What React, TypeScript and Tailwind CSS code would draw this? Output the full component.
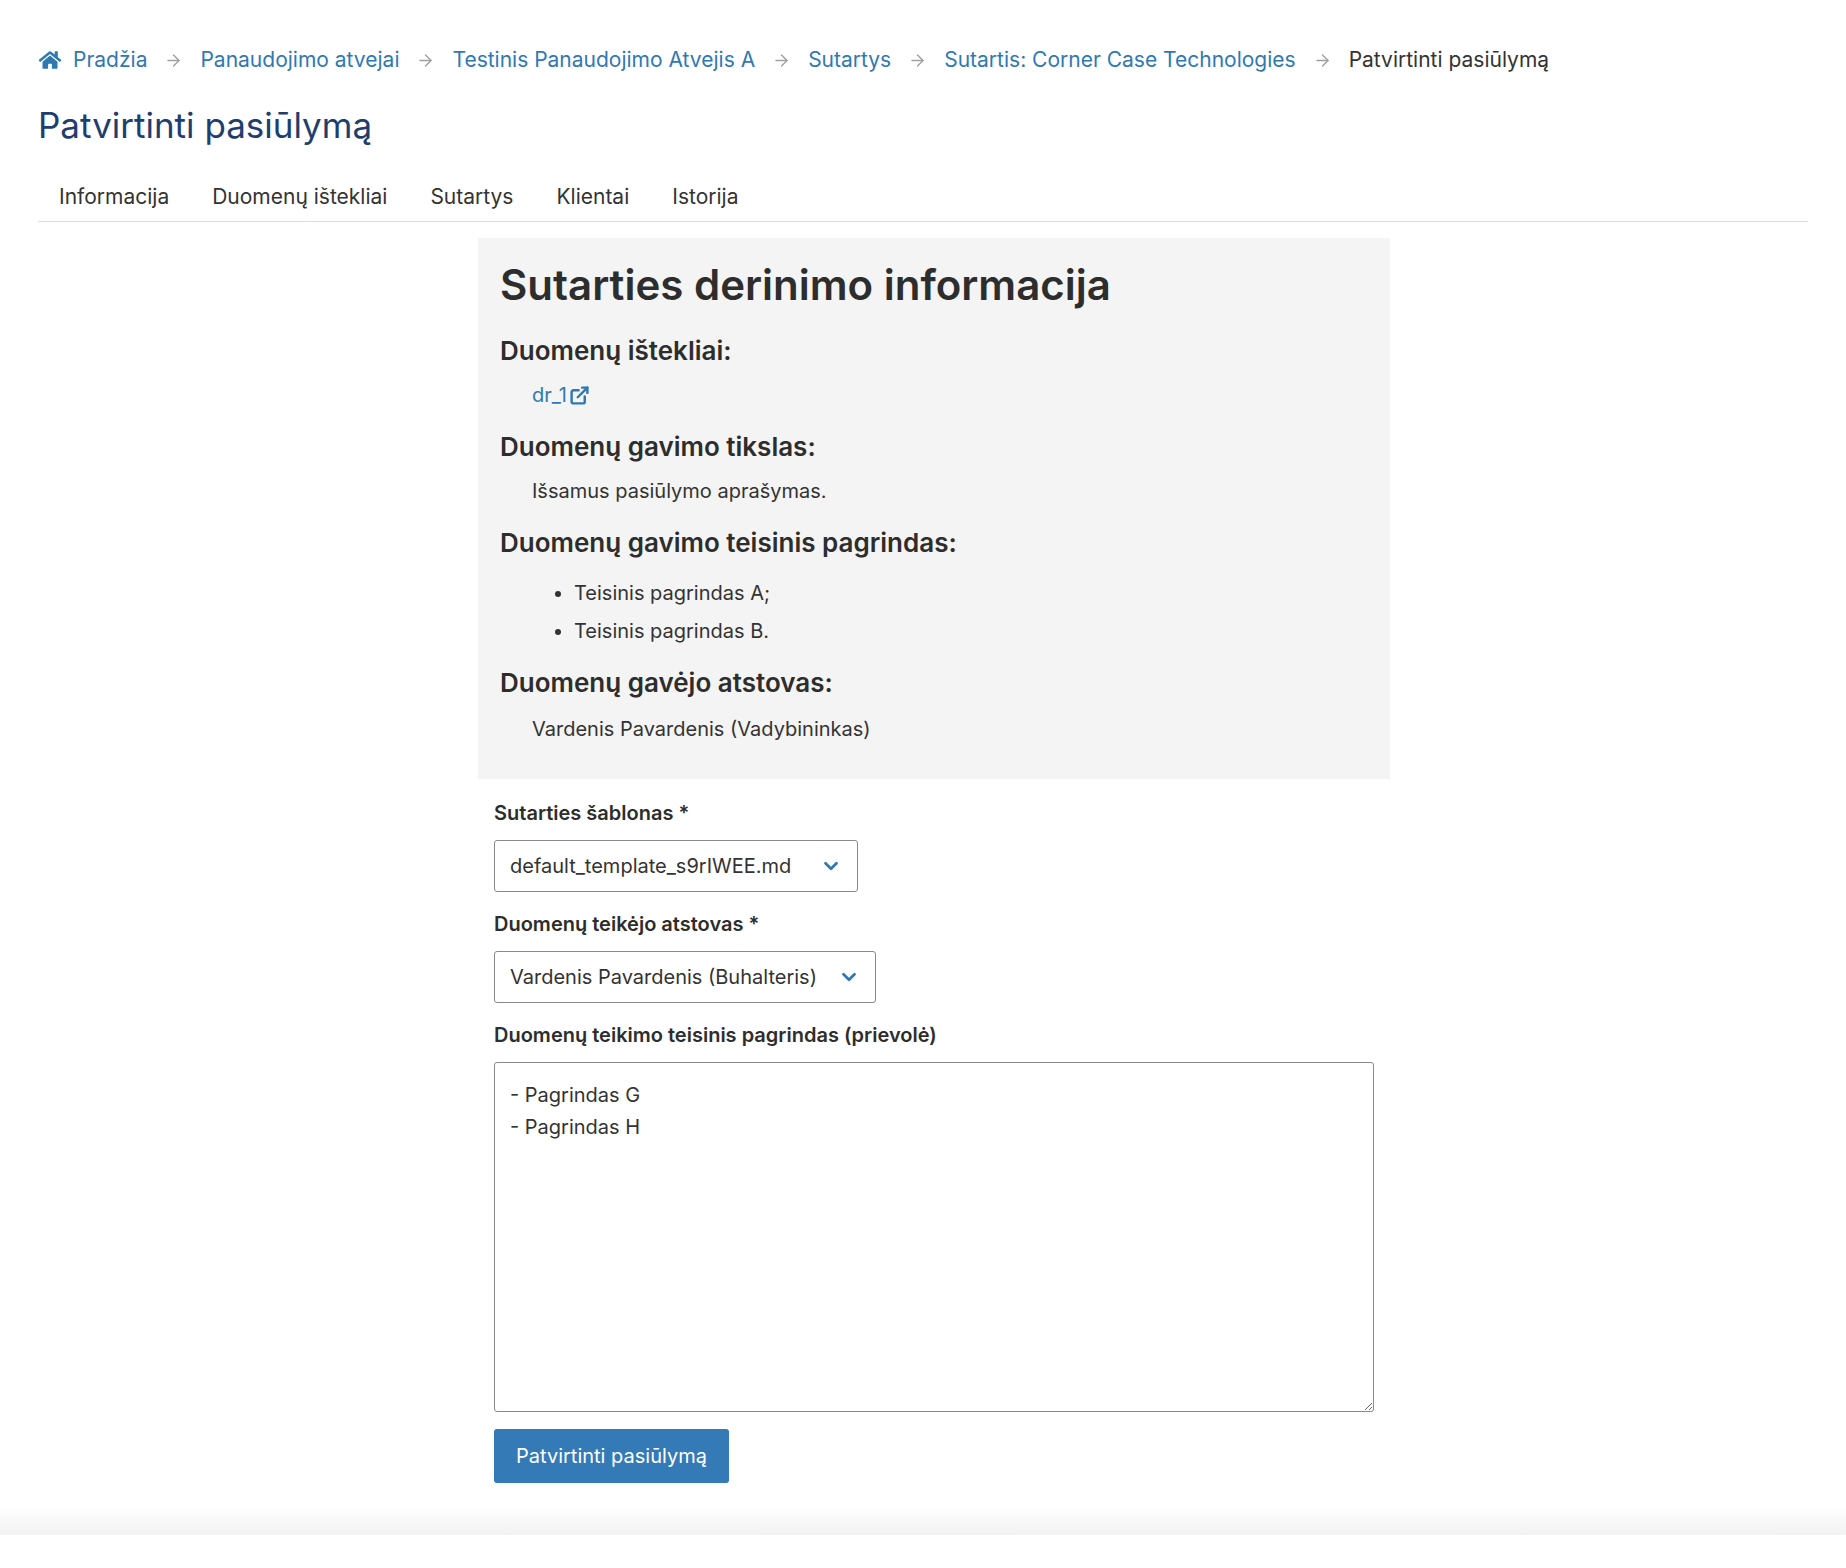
import { ArrowRight, ChevronDown, ExternalLink } from "lucide-react";

const crumbs = [
  "Panaudojimo atvejai",
  "Testinis Panaudojimo Atvejis A",
  "Sutartys",
  "Sutartis: Corner Case Technologies",
];

const tabs = ["Informacija", "Duomenų ištekliai", "Sutartys", "Klientai", "Istorija"];

function Sep() {
  return <ArrowRight className="mx-[17px] h-[19px] w-[19px] text-[#a0a0a0]" strokeWidth={1.8} />;
}

export default function App() {
  return (
    <div
      className="min-h-[1568px] bg-white text-[#333]"
      style={{ fontFamily: "Inter, 'Noto Sans', sans-serif" }}
    >
      <div className="px-[38px] pt-[46px]">
        {/* breadcrumb */}
        <nav className="flex items-center text-[21px] leading-[28px]">
          <svg viewBox="0 0 576 512" className="mr-[11px] h-[20px] w-[24px] fill-[#2f79b2]">
            <path d="M280.4 148.3L96 300.1V464a16 16 0 0016 16l112.1-.3a16 16 0 0015.9-16V368a16 16 0 0116-16h64a16 16 0 0116 16v95.6a16 16 0 0016 16.1L464 480a16 16 0 0016-16V300L295.7 148.3a12.2 12.2 0 00-15.3 0zM571.6 251.5L488 182.6V44.1a12 12 0 00-12-12h-56a12 12 0 00-12 12v72.6L318.5 43a48 48 0 00-61 0L4.3 251.5a12 12 0 00-1.6 16.9l25.5 31A12 12 0 0045.2 301l235.2-193.7a12.2 12.2 0 0115.3 0L530.9 301a12 12 0 0016.9-1.6l25.5-31a12 12 0 00-1.7-16.9z" />
          </svg>
          <a className="text-[#2f79b2]">Pradžia</a>
          {crumbs.map((c) => (
            <span key={c} className="flex items-center">
              <Sep />
              <a className="text-[#2f79b2]">{c}</a>
            </span>
          ))}
          <Sep />
          <span className="text-[#333]">Patvirtinti pasiūlymą</span>
        </nav>

        <h1 className="mt-[30px] text-[35px] leading-[42px] text-[#1d3e6e]">Patvirtinti pasiūlymą</h1>

        {/* tabs */}
        <div className="mt-[37px] flex border-b border-[#dcdcdc] pl-[21px] text-[21px] text-[#333]">
          {tabs.map((t) => (
            <div key={t} className="mr-[43px] pb-[10px] leading-[28px]">
              {t}
            </div>
          ))}
        </div>

        <div className="ml-[440px] w-[912px]">
          {/* info panel */}
          <div className="mt-[16px] bg-[#f4f4f4] px-[22px] pb-[36px] pt-[22px]">
            <h2 className="text-[42px] font-semibold leading-[50px] text-[#2d2d2d]">
              Sutarties derinimo informacija
            </h2>
            <h3 className="mt-[25px] text-[26px] font-semibold leading-[32px] text-[#2d2d2d]">Duomenų ištekliai:</h3>
            <a className="ml-[32px] mt-[14px] flex items-center text-[20px] leading-[28px] text-[#2f79b2]">
              dr_1
              <ExternalLink className="ml-[2px] h-[21px] w-[21px]" strokeWidth={2.8} />
            </a>
            <h3 className="mt-[22px] text-[26px] font-semibold leading-[32px] text-[#2d2d2d]">Duomenų gavimo tikslas:</h3>
            <p className="ml-[32px] mt-[14px] text-[20px] leading-[28px]">Išsamus pasiūlymo aprašymas.</p>
            <h3 className="mt-[22px] text-[26px] font-semibold leading-[32px] text-[#2d2d2d]">
              Duomenų gavimo teisinis pagrindas:
            </h3>
            <ul className="ml-[74px] mt-[20px] list-disc text-[20px] leading-[28px]">
              <li>Teisinis pagrindas A;</li>
              <li className="mt-[10px]">Teisinis pagrindas B.</li>
            </ul>
            <h3 className="mt-[22px] text-[26px] font-semibold leading-[32px] text-[#2d2d2d]">Duomenų gavėjo atstovas:</h3>
            <p className="ml-[32px] mt-[16px] text-[20px] leading-[28px]">Vardenis Pavardenis (Vadybininkas)</p>
          </div>

          {/* form */}
          <div className="px-[16px] pt-[20px]">
            <label className="block text-[20px] font-semibold leading-[28px] text-[#2d2d2d]">Sutarties šablonas *</label>
            <div className="mt-[13px] flex h-[52px] w-[364px] items-center justify-between rounded-[3px] border border-[#8a8a8a] px-[15px] text-[20px]">
              <span>default_template_s9rIWEE.md</span>
              <ChevronDown className="h-[22px] w-[22px] text-[#2f79b2]" strokeWidth={3} />
            </div>
            <label className="mt-[18px] block text-[20px] font-semibold leading-[28px] text-[#2d2d2d]">
              Duomenų teikėjo atstovas *
            </label>
            <div className="mt-[13px] flex h-[52px] w-[382px] items-center justify-between rounded-[3px] border border-[#8a8a8a] px-[15px] text-[20px]">
              <span>Vardenis Pavardenis (Buhalteris)</span>
              <ChevronDown className="h-[22px] w-[22px] text-[#2f79b2]" strokeWidth={3} />
            </div>
            <label className="mt-[18px] block text-[20px] font-semibold leading-[28px] text-[#2d2d2d]">
              Duomenų teikimo teisinis pagrindas (prievolė)
            </label>
            <textarea
              className="mt-[13px] block h-[350px] w-[880px] rounded-[3px] border border-[#8a8a8a] px-[15px] py-[16px] text-[20px] leading-[32px] text-[#333]"
              defaultValue={"- Pagrindas G\n- Pagrindas H"}
            />
            <button className="mt-[17px] h-[54px] rounded-[3px] bg-[#337ab7] px-[22px] text-[20px] text-white">
              Patvirtinti pasiūlymą
            </button>
          </div>
        </div>
      </div>
      <div className="mt-[24px] h-[28px] bg-gradient-to-b from-white to-[#f2f2f2]" />
    </div>
  );
}
